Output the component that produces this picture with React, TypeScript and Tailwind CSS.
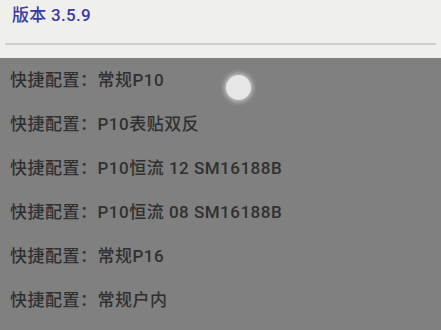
const rows = [
  '常规P10',
  'P10表贴双反',
  'P10恒流 12 SM16188B',
  'P10恒流 08 SM16188B',
  '常规P16',
  '常规户内',
];

export default function App() {
  return (
    <div
      className="relative w-[441px] h-[330px] overflow-hidden bg-[#808080]"
      style={{ fontFamily: 'Roboto, "Noto Sans CJK SC", sans-serif' }}
    >
      {/* header */}
      <div className="h-[58px] bg-[#efefeb] pt-[2px]">
        <div className="pl-[12px] text-[17px] leading-[26px] font-medium tracking-[0.3px] text-[#3a3aa6]">版本 3.5.9</div>
        <div className="mx-[5px] mt-[15px] h-[2px] bg-[#cfcfcc]" />
      </div>

      {/* quick configs */}
      <div className="flex flex-col pt-[1px]">
        {rows.map((r) => (
          <div
            key={r}
            className="h-[44px] flex items-center pl-[10px] text-[17px] font-medium tracking-[0.5px] text-[#303030]"
          >
            快捷配置：{r}
          </div>
        ))}
      </div>

      {/* touch indicator */}
      <div className="absolute left-[226px] top-[75px] w-[25px] h-[25px] rounded-full bg-[#e6e6e6] shadow-[0_0_4px_2px_rgba(255,255,255,0.5)]" />
    </div>
  );
}
